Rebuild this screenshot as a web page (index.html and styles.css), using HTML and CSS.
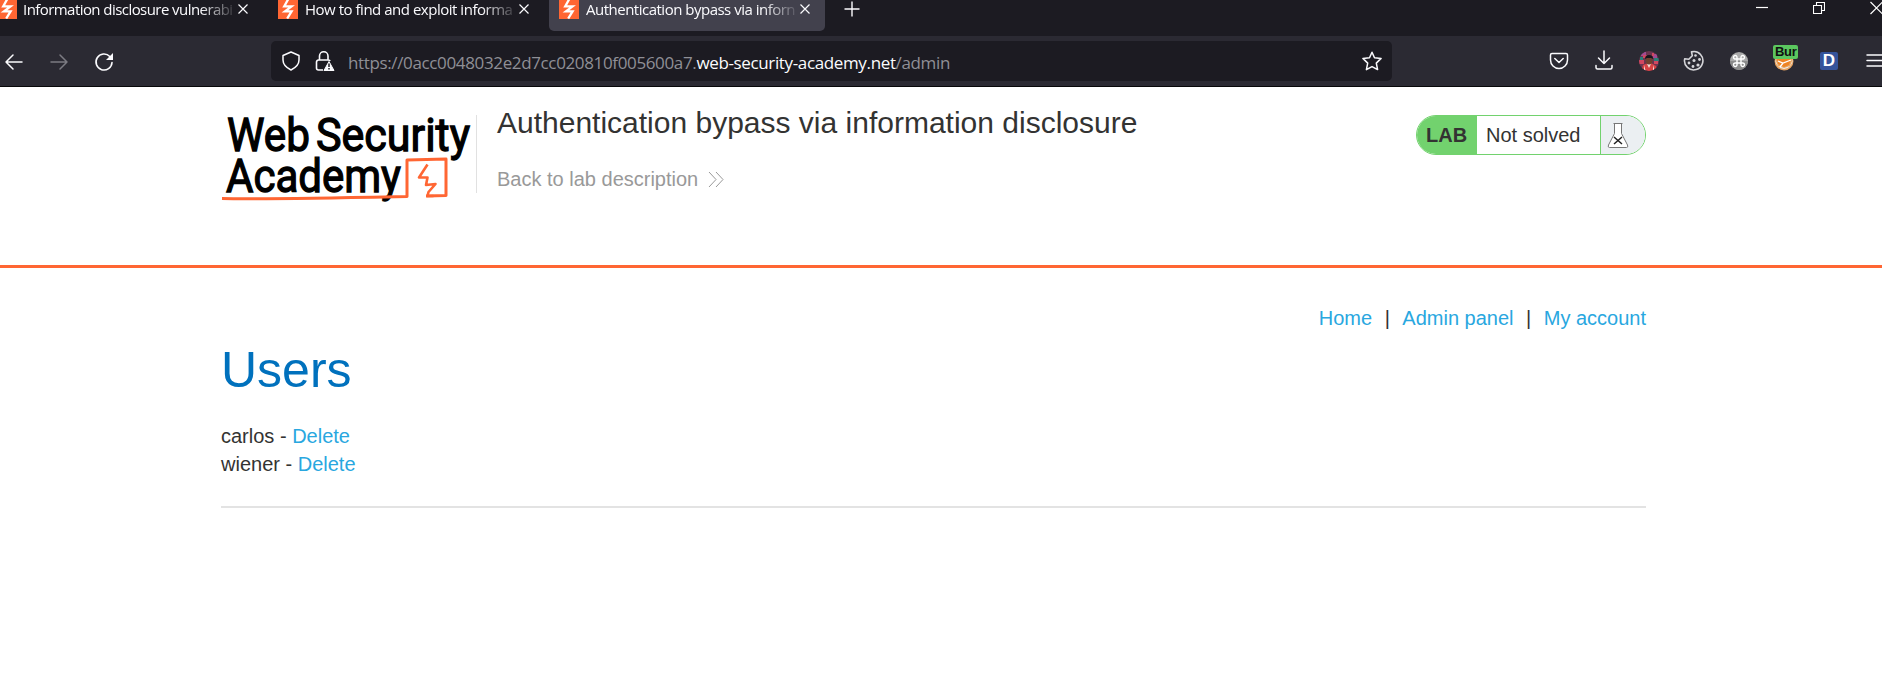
FILE: index.html
```html
<!DOCTYPE html>
<html lang="en">
<head>
<meta charset="utf-8">
<title>Authentication bypass via information disclosure</title>
<link rel="stylesheet" href="styles.css">
</head>
<body>
<svg class="defs" aria-hidden="true">
  <symbol id="bolt" viewBox="0 0 20 20"><path fill="#ff6633" d="M0 0h20v20H0z"/><path fill="none" stroke="#fff" stroke-width="2.3" d="M10.3 0 6.2 7.4h7.3L7 12.3h6.6L9.2 19.5"/></symbol>
  <symbol id="x" viewBox="0 0 12 12"><path fill="none" stroke="currentColor" stroke-width="1.2" d="m1.5 1.5 9 9m0-9-9 9"/></symbol>
</svg>
<div class="tabs">
  <div class="tab first"><svg class="fav"><use href="#bolt"/></svg><span class="label t1">Information disclosure vulnerabi</span><svg class="close"><use href="#x"/></svg></div>
  <div class="tab"><svg class="fav"><use href="#bolt"/></svg><span class="label t2">How to find and exploit informa</span><svg class="close"><use href="#x"/></svg></div>
  <div class="tab active"><svg class="fav"><use href="#bolt"/></svg><span class="label t3">Authentication bypass via inforn</span><svg class="close"><use href="#x"/></svg></div>
  <svg class="plus" width="16" height="18" viewBox="0 0 16 18"><path stroke="#fbfbfe" stroke-width="1.4" d="M.5 9h15M8 1.500v15"/></svg>
  <div class="window">
    <svg width="12" height="18"><path stroke="#fff" stroke-width="1.200" d="M0 7.500h12"/></svg>
    <svg width="12" height="18"><path fill="none" stroke="#fff" stroke-width="1.100" d="M.5 5.500h8v8h-8zM3.500 5.500v-3h8v8h-3"/></svg>
    <svg width="13" height="18"><path stroke="#fff" stroke-width="1.200" d="m.5 2 12 12m0-12-12 12"/></svg>
  </div>
</div>
<div class="toolbar">
  <div class="history">
    <svg width="20" height="20"><path fill="none" stroke="#fbfbfe" stroke-width="1.500" stroke-linecap="round" stroke-linejoin="round" d="M18 10H2m7-7-7 7 7 7"/></svg>
    <svg width="20" height="20"><path fill="none" stroke="#7c7b83" stroke-width="1.500" stroke-linecap="round" stroke-linejoin="round" d="M2 10h16m-7-7 7 7-7 7"/></svg>
    <svg width="20" height="20"><path fill="none" stroke="#fbfbfe" stroke-width="1.600" stroke-linecap="round" d="M15.800 4.500a8 8 0 1 0 2.200 6"/><path fill="#fbfbfe" d="M19 1v7h-7z"/></svg>
  </div>
  <div class="urlbar">
    <svg width="20" height="22"><path fill="none" stroke="#fbfbfe" stroke-width="1.500" stroke-linejoin="round" d="M10 2 18 5.500v4.500c0 4-3 7.500-8 10-5-2.500-8-6-8-10V5.500z"/></svg>
    <svg class="lock" width="20" height="22"><path fill="none" stroke="#fbfbfe" stroke-width="1.600" d="M4.500 10V6a4 4 0 0 1 8.500 0v4M8 20H3.500a2 2 0 0 1-2-2v-6a2 2 0 0 1 2-2H13q2 0 2 1"/><path fill="#fbfbfe" stroke="#fbfbfe" stroke-linejoin="round" d="m14 11.500 5 9H9z"/><path stroke="#1c1b22" stroke-width="1.500" d="M14 13.500v3.500m0 1v1.500"/></svg>
    <span class="url">https://0acc0048032e2d7cc020810f005600a7.<b>web-security-academy.net</b>/admin</span>
    <svg class="star" width="22" height="22"><path fill="none" stroke="#fbfbfe" stroke-width="1.500" stroke-linejoin="round" d="m11 2.200 2.500 5.500 6.600.7-4.800 4.700 1.300 6.500-5.600-3-5.600 3 1.300-6.500L1.900 8.400l6.600-.7z"/></svg>
  </div>
  <div class="tools">
    <svg viewBox="0 0 22 22"><path fill="none" stroke="#fbfbfe" stroke-width="1.500" stroke-linecap="round" stroke-linejoin="round" d="M4 3.500h14q1.500 0 1.500 1.500v5a8.300 8.300 0 0 1-17 0V5Q2.500 3.500 4 3.500zM6.800 8.500l4.200 4 4.200-4"/></svg>
    <svg viewBox="0 0 22 22"><path fill="none" stroke="#fbfbfe" stroke-width="1.500" stroke-linecap="round" stroke-linejoin="round" d="M11 1v12.500M5.500 8l5.500 5.500L16.500 8M3 15.500v2q0 1.500 1.500 1.500h13q1.500 0 1.500-1.500v-2"/></svg>
    <svg viewBox="0 0 22 22"><clipPath id="face"><circle cx="11" cy="11" r="10"/></clipPath><g clip-path="url(#face)"><path fill="#6b344f" d="M0 0h22v22H0z"/><path fill="#a04b91" d="M2 2h6v4H2zm13 2h4v4h-4z"/><path fill="#d14760" d="M5 5h4v3H5zM1 10h5v4H1zm13-7h2v3h-2zm2 8h4v3h-4z"/><path fill="#287d78" d="M16 8h5v3h-5zM2 7h3v3H2z"/><path fill="#d74345" d="m3 22 2-7 5-2h3l5 3 2 6z"/><path fill="#f2ddd8" d="m6 15 2 7H6zm9 0 2 7h-2zM9 14h4l-2 4z"/><ellipse cx="11" cy="10" rx="3.400" ry="4.600" fill="#70402f"/><path fill="#15151c" d="M7 9q0-4 4-4t4 4l-2-1H9z"/></g></svg>
    <svg viewBox="0 0 22 22"><path fill="none" stroke="#d5d5d9" stroke-width="1.600" stroke-linejoin="round" d="M8.500 1.900Q14 .5 17.500 4.500a9.200 9.200 0 1 1-15.800 4.300l4.100.4 3.500-3.500z"/><g fill="#d5d5d9"><circle cx="12.500" cy="5.500" r="1.300"/><circle cx="16.500" cy="9.500" r="1.400"/><circle cx="11" cy="10.500" r="1.500"/><circle cx="15" cy="15" r="1.600"/><circle cx="10" cy="16.500" r="1.400"/><circle cx="6" cy="13" r="1.400"/></g></svg>
    <svg viewBox="0 0 22 22"><circle cx="11" cy="11" r="9" fill="#aaa"/><path fill="#8b8b8b" d="M2 11a9 9 0 0 0 18 0z"/><path fill="none" stroke="#fff" stroke-width="1.400" d="M9 9H7.500A1.750 1.750 0 1 1 9 7.500v7A1.750 1.750 0 1 1 7.500 13h7a1.750 1.750 0 1 1-1.500 1.500v-7A1.750 1.750 0 1 1 14.500 9H9"/></svg>
    <div class="burp"><svg viewBox="0 0 22 22"><circle cx="11" cy="11" r="9.500" fill="#e8a562"/><path fill="#eee" d="M2 9q1 9 9 10 8-1 9-10l-3 7-6 2-6-2z"/><path fill="#ee8424" d="m4 8 14 1-2 6-5 2-6-3z"/><path fill="none" stroke="#fff" stroke-width="1.300" d="m5 11 5 2 8-3M10 13l-3 4"/></svg><span class="badge">Bur</span></div>
    <span class="d">D</span>
    <svg class="menu" viewBox="0 0 22 22"><path stroke="#fbfbfe" stroke-width="1.500" stroke-linecap="round" d="M4 5h15M4 10.500h15M4 16h15"/></svg>
  </div>
</div>
<header class="header">
  <div class="container head">
    <div class="brand"><svg class="logo" width="255" height="92" viewBox="0 0 255 92">
      <g class="logo-text"><text x="6" y="35.500" textLength="83" lengthAdjust="spacingAndGlyphs">Web</text><text x="95" y="35.500" textLength="154" lengthAdjust="spacingAndGlyphs">Security</text><text x="5" y="76.500" textLength="175" lengthAdjust="spacingAndGlyphs">Academy</text></g>
      <g fill="none" stroke="#ff6633" stroke-linejoin="round"><path stroke-width="3" d="M1 83.500c40 1 110-.5 185-2V45l39-1v36.500l-20 .5"/><path stroke-width="2.600" d="m206.500 49.500-8.500 13h8.500l-1.500 7.500 9.500-1-7 8-1 4h6"/></g>
    </svg></div>
    <div class="title">
      <h2>Authentication bypass via information disclosure</h2>
      <a class="back">Back to lab description<svg width="16" height="17"><path fill="none" stroke="#999" d="m1 1 7 7.500L1 16M8 1l7 7.500L8 16"/></svg></a>
    </div>
    <div class="status"><strong>LAB</strong><span class="state">Not solved</span><span class="flask"><svg width="22" height="27"><path fill="#fff" stroke="#777" d="M7.500 1.500v10L1.500 23q-1 2.500 1 2.500h17q2 0 1-2.500l-6-11.500v-10M6.500 1.500h9"/><path stroke="#222" stroke-width="1.500" d="m7 15 8 7m0-7-8 7"/></svg></span></div>
  </div>
</header>
<main class="container">
  <nav class="nav"><a>Home</a><span>|</span><a>Admin panel</a><span>|</span><a>My account</a></nav>
  <h1>Users</h1>
  <div class="user">carlos - <a>Delete</a></div>
  <div class="user">wiener - <a>Delete</a></div>
  <hr>
</main>
</body>
</html>
```
FILE: styles.css
```css
* { box-sizing: border-box; }
body { margin: 0; height: 687px; overflow: hidden; background: #fff; color: #333332; font: 20px/28px "Liberation Sans", Arial, sans-serif; }
svg { display: block; flex: none; }
.defs { position: absolute; width: 0; height: 0; }
.tabs { display: flex; height: 36px; background: #1c1b22; color: #fbfbfe; font: 15px/18px "Open Sans", "Noto Sans", sans-serif; }
.tab { display: flex; width: 276px; height: 31px; margin-right: 5px; padding-left: 10px; flex: none; }
.tab.first { margin-left: -13px; }
.active { background: #42414d; border-radius: 0 0 5px 5px; }
.fav { width: 20px; height: 20px; margin-top: -1px; }
.label { width: 211px; margin-left: 6px; height: 24px; white-space: nowrap; -webkit-mask-image: linear-gradient(90deg, #000 84%, transparent 102%); mask-image: linear-gradient(90deg, #000 84%, transparent 102%); }
.t1 { letter-spacing: -.56px; }
.t2 { margin-left: 7px; width: 210px; letter-spacing: -.48px; }
.t3 { margin-left: 7px; width: 210px; letter-spacing: -.5px; }
.close { width: 12px; height: 12px; margin: 3px 0 0 3px; }
.plus { margin-left: 14px; }
.window { display: flex; gap: 45px; margin-left: auto; margin-right: -1px; }
.toolbar { display: flex; height: 51px; background: #2b2a33; border-bottom: 1px solid #08080a; }
.history { display: flex; gap: 25px; width: 267px; padding: 16px 0 0 4px; flex: none; }
.urlbar { display: flex; width: 1121px; height: 40px; margin: 5px 0 0 4px; padding: 9px 9px 0 10px; background: #1c1b22; border-radius: 5px; flex: none; }
.lock { margin-left: 14px; }
.url { margin: 1px 0 0 13px; color: #8f8f96; font: 17px/24px "Open Sans", "Noto Sans", sans-serif; letter-spacing: -.36px; white-space: nowrap; }
.url b { color: #fbfbfe; font-weight: 400; }
.star { margin-left: auto; }
.tools { display: flex; gap: 23px; width: 334px; padding-top: 14px; margin-left: 156px; flex: none; }
.tools svg { width: 22px; height: 22px; }
.burp { position: relative; }
.badge { position: absolute; left: 0; top: -5px; width: 25px; height: 14px; padding-left: 2px; border-radius: 2px; background: #5bc75f; color: #101010; font: bold 13px/13px "Liberation Sans", sans-serif; letter-spacing: -.3px; }
.d { width: 18px; height: 18px; margin: 2px; flex: none; background: #35549b; color: #fff; border-radius: 2px; font: bold 17px/18px "Liberation Sans", sans-serif; text-align: center; }
.container { width: 1425px; margin-left: 221px; }
.header { height: 181px; border-bottom: 3px solid #ff6633; }
.head { display: flex; padding-top: 28px; }
.brand { width: 256px; height: 78px; border-right: 1px solid #e1e1e1; flex: none; }
.logo-text { font: 47px "Roboto", sans-serif; fill: #000; stroke: #000; stroke-width: 1.300px; }
.title { padding-left: 20px; }
h2 { margin: -10px 0 0; font-size: 30px; line-height: 36px; font-weight: 400; white-space: nowrap; }
.back { display: flex; align-items: center; gap: 10px; margin-top: 24px; color: #999; }
.status { display: flex; width: 230px; height: 40px; margin-left: auto; overflow: hidden; border: 1px solid #72d26e; border-radius: 20px; line-height: 38px; }
.status strong { width: 60px; padding-left: 9px; background: #72d26e; }
.state { width: 124px; padding-left: 9px; border-right: 1px solid #72d26e; }
.flask { flex: 1; padding: 6px 0 0 6px; background: #ebeff2; }
.nav { display: flex; justify-content: flex-end; padding-top: 36px; line-height: 28px; }
.nav span { margin: 0 12.500px; }
a { color: #29a7df; }
h1 { margin: 5px 0 18px; color: #0071bd; font-size: 50px; line-height: 67px; font-weight: 400; }
.user { line-height: 28px; }
hr { height: 2px; margin: 28px 0 0; border: 0; background: #e3e3e3; }
```
